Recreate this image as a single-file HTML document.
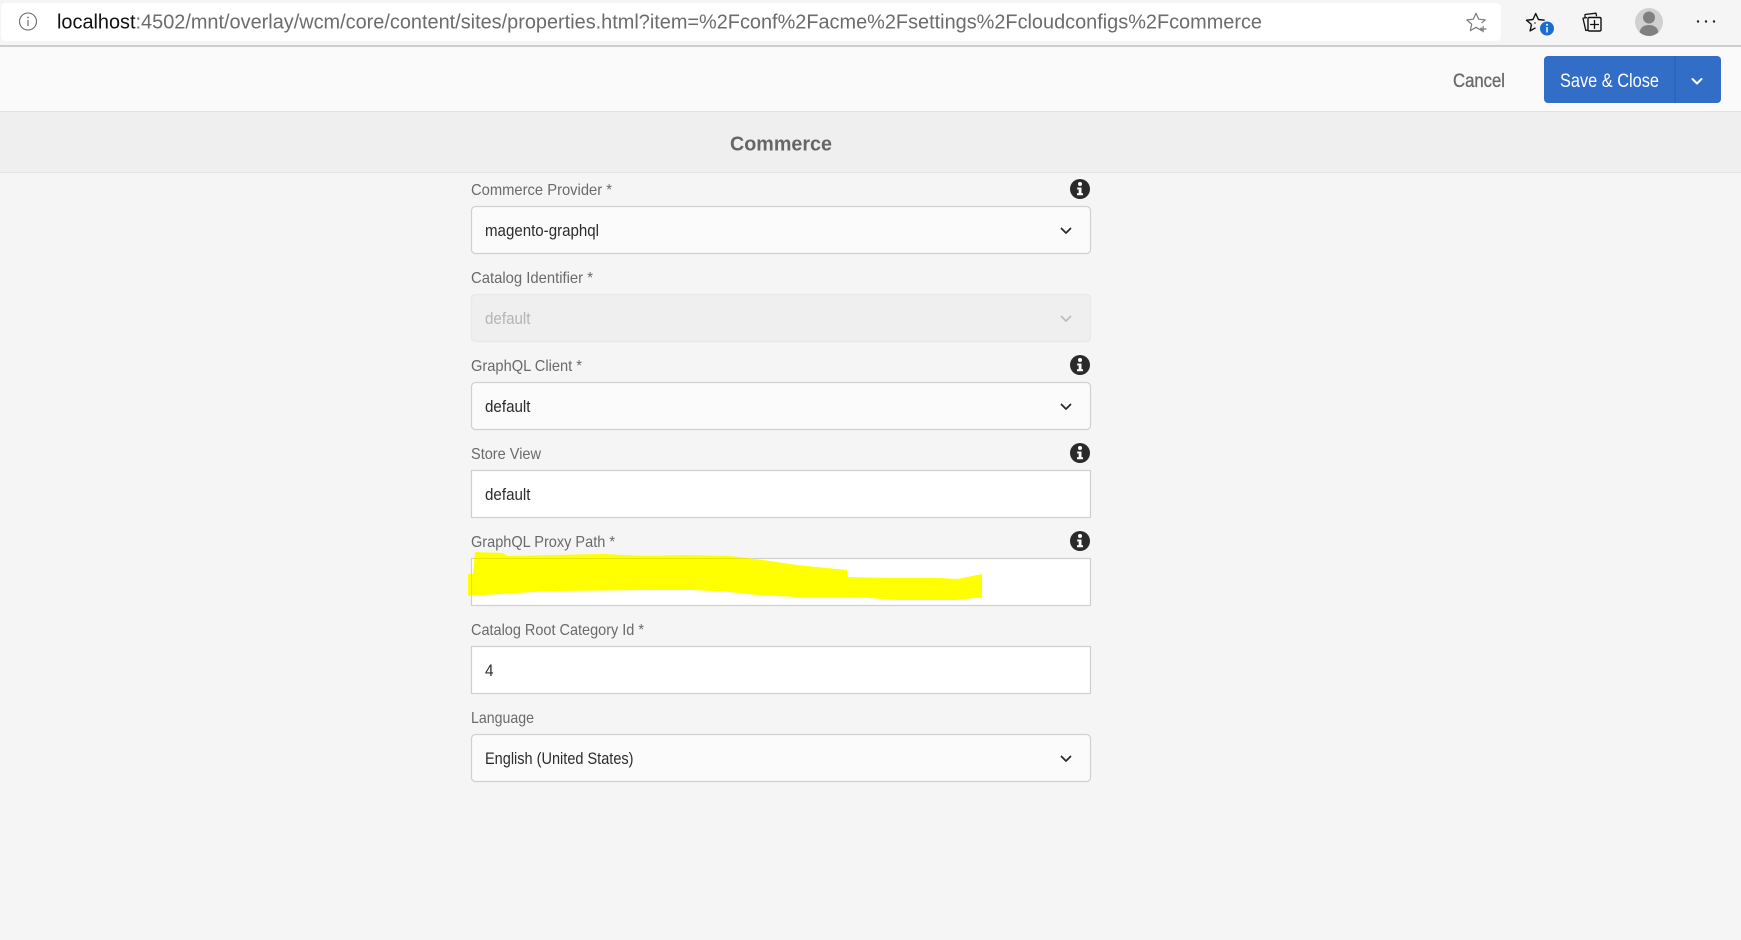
<!DOCTYPE html>
<html lang="en">
<head>
<meta charset="utf-8">
<title>Commerce</title>
<style>
html,body{margin:0;padding:0;width:1741px;height:940px;overflow:hidden;background:#f5f5f5}
svg{display:block}
text{font-family:"Liberation Sans",sans-serif}
.l{font-size:16px;fill:#6a6a6a}
.v{font-size:16.5px;fill:#2c2c2c}
.sel{fill:#fbfbfb;stroke:#d0d0d0;stroke-width:1.2}
.inp{fill:#fff;stroke:#cfcfcf;stroke-width:1.2}
.chev{fill:none;stroke:#2c2c2c;stroke-width:1.8;stroke-linecap:round;stroke-linejoin:round}
</style>
</head>
<body>
<svg width="1741" height="940" viewBox="0 0 1741 940" xmlns="http://www.w3.org/2000/svg">
  <!-- page -->
  <rect width="1741" height="940" fill="#f5f5f5"/>

  <!-- browser toolbar -->
  <rect width="1741" height="46" fill="#f5f5f5"/>
  <rect x="1" y="3" width="1500" height="38" rx="5" fill="#fff"/>
  <rect y="45" width="1741" height="2" fill="#cdcdcd"/>
  <circle cx="28" cy="21.5" r="8.5" fill="none" stroke="#6a6a6a" stroke-width="1.1"/>
  <path d="M28 20v6" stroke="#6a6a6a" stroke-width="1.2"/>
  <circle cx="28" cy="17.5" r=".9" fill="#6a6a6a"/>
  <text x="57" y="28.5" font-size="20" fill="#6c6c6c" textLength="1205" lengthAdjust="spacingAndGlyphs"><tspan fill="#111">localhost</tspan>:4502/mnt/overlay/wcm/core/content/sites/properties.html?item=%2Fconf%2Facme%2Fsettings%2Fcloudconfigs%2Fcommerce</text>

  <!-- add to favorites star -->
  <path d="M1481 27.500l1 3.200-6-3.400-5.700 3.300 1.400-6.400-4.900-4.300 6.500-.7 2.700-6 2.700 6 6.500.7-3.600 3.200" fill="none" stroke="#7c7c7c" stroke-width="1.200" stroke-linejoin="round"/>
  <path d="M1480 29h6.500M1483.200 26v6.200" stroke="#7c7c7c" stroke-width="1.200"/>

  <!-- favorites -->
  <path d="M1531.500 24.500l-5-4.300 6.500-.7 2.700-6 2.700 6 6.300.7M1531.500 24.500l-1.400 6.400 5.400-3.100" fill="none" stroke="#111" stroke-width="1.400" stroke-linejoin="round"/>
  <path d="M1534 23h2" stroke="#333" stroke-width="1"/>
  <circle cx="1547" cy="28.500" r="7" fill="#1b6ecb"/>
  <path d="M1547 27v5.500" stroke="#fff" stroke-width="1.400"/>
  <circle cx="1547" cy="24.800" r="1" fill="#fff"/>

  <!-- collections -->
  <path d="M1587 17.500l-4 .8 2.800 12.200 2.800-.5" fill="none" stroke="#111" stroke-width="1.300" stroke-linejoin="round"/>
  <path d="M1585 17.500v-3l11-1.300.6 3" fill="none" stroke="#111" stroke-width="1.300" stroke-linejoin="round"/>
  <rect x="1588" y="17.500" width="13" height="13.500" rx="1.200" fill="#f5f5f5" stroke="#111" stroke-width="1.400"/>
  <path d="M1594.500 20v9M1590 24.500h9" stroke="#111" stroke-width="1.300"/>

  <!-- profile -->
  <circle cx="1649" cy="22" r="14" fill="#d0d0d0"/>
  <circle cx="1649" cy="17.500" r="6" fill="#808080"/>
  <path d="M1639.500 32.300c1-5.300 5-7.300 9.500-7.300s8.500 2 9.500 7.300a14 14 0 0 1-19 0z" fill="#808080"/>

  <!-- more -->
  <circle cx="1698" cy="21.500" r="1.200" fill="#222"/>
  <circle cx="1706" cy="21.500" r="1.200" fill="#222"/>
  <circle cx="1714" cy="21.500" r="1.200" fill="#222"/>

  <!-- action bar -->
  <rect y="47" width="1741" height="64" fill="#fafafa"/>
  <rect y="111" width="1741" height="1" fill="#e1e1e1"/>
  <text x="1453" y="87" font-size="19.500" fill="#6a6a6a" stroke="#6a6a6a" stroke-width=".35" textLength="52" lengthAdjust="spacingAndGlyphs">Cancel</text>
  <rect x="1544" y="56" width="177" height="47" rx="4" fill="#326ec8"/>
  <rect x="1674.500" y="56" width="1" height="47" fill="#2a5dac"/>
  <text x="1560" y="87" font-size="19.500" fill="#fff" textLength="99" lengthAdjust="spacingAndGlyphs">Save &amp; Close</text>
  <path d="M1692.500 79l4.500 4.500 4.500-4.500" fill="none" stroke="#fff" stroke-width="2" stroke-linecap="round" stroke-linejoin="round"/>

  <!-- title bar -->
  <rect y="112" width="1741" height="60" fill="#efefef"/>
  <rect y="172" width="1741" height="1" fill="#e3e3e3"/>
  <text x="730" y="150.500" font-size="20" font-weight="700" fill="#666" textLength="102" lengthAdjust="spacingAndGlyphs">Commerce</text>

  <!-- Commerce Provider -->
  <text class="l" x="471" y="195" textLength="141" lengthAdjust="spacingAndGlyphs">Commerce Provider *</text>
  <rect class="sel" x="471.500" y="206.500" width="619" height="47" rx="4"/>
  <text class="v" x="485" y="236" textLength="114" lengthAdjust="spacingAndGlyphs">magento-graphql</text>
  <path class="chev" d="M1061.500 228.500l4.500 4.500 4.500-4.500"/>

  <!-- Catalog Identifier -->
  <text class="l" x="471" y="283" textLength="122" lengthAdjust="spacingAndGlyphs">Catalog Identifier *</text>
  <rect x="471.500" y="294.500" width="619" height="47" rx="4" fill="#efefef" stroke="#e8e8e8" stroke-width="1.200"/>
  <text class="v" x="485" y="324" style="fill:#b4b4b4" textLength="45.500" lengthAdjust="spacingAndGlyphs">default</text>
  <path class="chev" style="stroke:#bdbdbd" d="M1061.500 316.500l4.500 4.500 4.500-4.500"/>

  <!-- GraphQL Client -->
  <text class="l" x="471" y="371" textLength="111" lengthAdjust="spacingAndGlyphs">GraphQL Client *</text>
  <rect class="sel" x="471.500" y="382.500" width="619" height="47" rx="4"/>
  <text class="v" x="485" y="412" textLength="45.500" lengthAdjust="spacingAndGlyphs">default</text>
  <path class="chev" d="M1061.500 404.500l4.500 4.500 4.500-4.500"/>

  <!-- Store View -->
  <text class="l" x="471" y="459" textLength="70" lengthAdjust="spacingAndGlyphs">Store View</text>
  <rect class="inp" x="471.500" y="470.500" width="619" height="47"/>
  <text class="v" x="485" y="500" textLength="45.500" lengthAdjust="spacingAndGlyphs">default</text>

  <!-- GraphQL Proxy Path -->
  <text class="l" x="471" y="547" textLength="144" lengthAdjust="spacingAndGlyphs">GraphQL Proxy Path *</text>
  <rect class="inp" x="471.500" y="558.500" width="619" height="47"/>
  <path fill="#ffff00" d="M475 552L503 553L507 556L553 555L603 554L647 556L683 555L730 556L763 560L797 565L847 570L848 577L890 578L940 578L957 579L982 574L982 597L957 600L897 600L857 597L797 597L757 595L730 592L693 590L647 590L560 591L533 592L503 594L482 595L468 596L468 574L473 574Z"/>
  <path d="M474 558.500H748M471.500 574V595" fill="none" stroke="#e6e600" stroke-width="1"/>

  <!-- Catalog Root Category Id -->
  <text class="l" x="471" y="635" textLength="173" lengthAdjust="spacingAndGlyphs">Catalog Root Category Id *</text>
  <rect class="inp" x="471.500" y="646.500" width="619" height="47"/>
  <text class="v" x="485" y="676" textLength="8.500" lengthAdjust="spacingAndGlyphs">4</text>

  <!-- Language -->
  <text class="l" x="471" y="723" textLength="63" lengthAdjust="spacingAndGlyphs">Language</text>
  <rect class="sel" x="471.500" y="734.500" width="619" height="47" rx="4"/>
  <text class="v" x="485" y="764" textLength="148.500" lengthAdjust="spacingAndGlyphs">English (United States)</text>
  <path class="chev" d="M1061.500 756.500l4.500 4.500 4.500-4.500"/>

  <!-- info icons -->
  <g transform="translate(1080 189)">
    <circle r="10" fill="#2a2a2a"/>
    <circle cy="-5" r="2" fill="#fff"/>
    <path d="M-2.800-1.500H1.500V4.300H3V6.300H-3V4.300H-1.300V.5H-2.800Z" fill="#fff"/>
  </g>
  <g transform="translate(1080 365)">
    <circle r="10" fill="#2a2a2a"/>
    <circle cy="-5" r="2" fill="#fff"/>
    <path d="M-2.800-1.500H1.500V4.300H3V6.300H-3V4.300H-1.300V.5H-2.800Z" fill="#fff"/>
  </g>
  <g transform="translate(1080 453)">
    <circle r="10" fill="#2a2a2a"/>
    <circle cy="-5" r="2" fill="#fff"/>
    <path d="M-2.800-1.500H1.500V4.300H3V6.300H-3V4.300H-1.300V.5H-2.800Z" fill="#fff"/>
  </g>
  <g transform="translate(1080 541)">
    <circle r="10" fill="#2a2a2a"/>
    <circle cy="-5" r="2" fill="#fff"/>
    <path d="M-2.800-1.500H1.500V4.300H3V6.300H-3V4.300H-1.300V.5H-2.800Z" fill="#fff"/>
  </g>
</svg>
</body>
</html>
